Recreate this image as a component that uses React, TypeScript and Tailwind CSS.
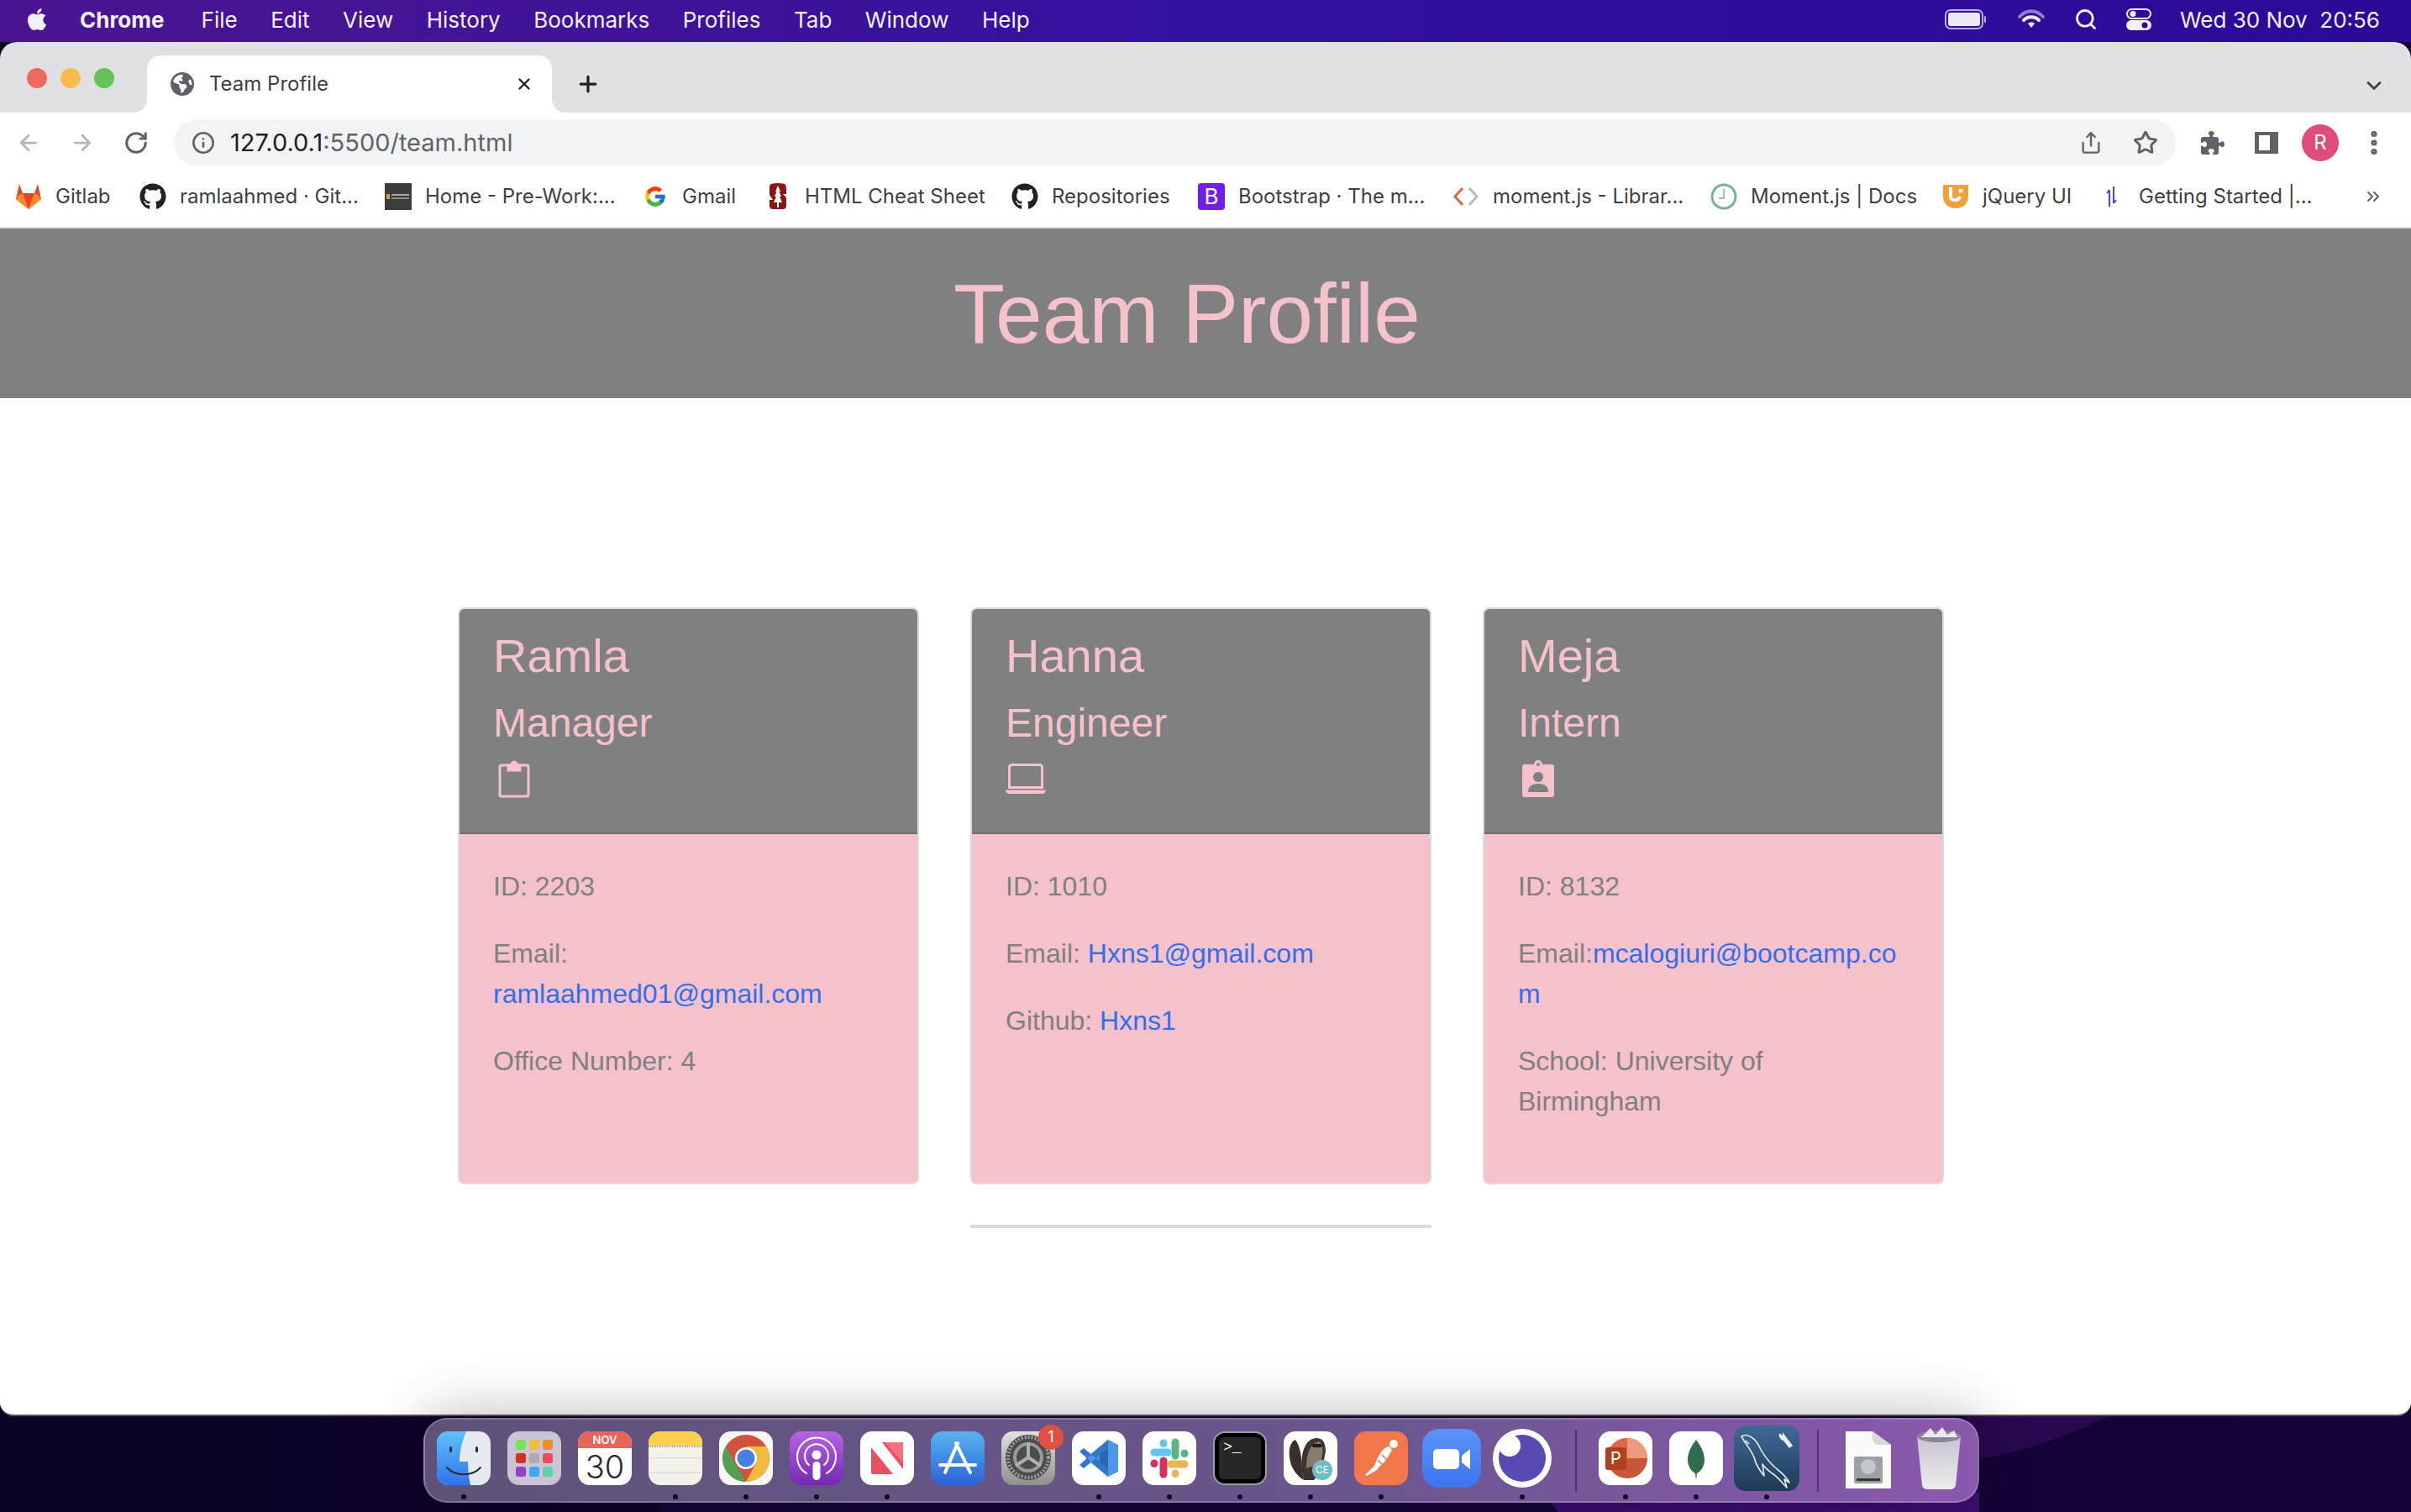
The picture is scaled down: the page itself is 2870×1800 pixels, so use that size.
import type { ReactNode } from 'react'
import { ArrowLeft, ArrowRight, ChevronDown, ChevronsRight, EllipsisVertical, Info, Plus, RotateCw, Search, Share, Star, X } from 'lucide-react'
import { BsLaptop } from 'react-icons/bs'
import { FaApple, FaEarthAmericas, FaGithub, FaPuzzlePiece } from 'react-icons/fa6'
import { FcGoogle } from 'react-icons/fc'

const menus = ['File', 'Edit', 'View', 'History', 'Bookmarks', 'Profiles', 'Tab', 'Window', 'Help']

function MenuBar() {
  return (
    <div className="h-[50px] shrink-0 flex items-center pb-1 bg-gradient-to-r from-[#4a1490] via-[#33109f] to-[#2a0a96] text-[#f3f0fa] text-[26px] font-['Inter',sans-serif]">
      <FaApple className="ml-[29px] text-[30px]" />
      <span className="ml-[36px] font-bold">Chrome</span>
      <div className="ml-[44px] flex gap-[39.5px]">
        {menus.map((m) => (
          <span key={m}>{m}</span>
        ))}
      </div>
      <div className="ml-auto flex items-center">
        <svg width="50" height="24" viewBox="0 0 50 24">
          <rect x="1" y="1" width="44" height="22" rx="6" fill="none" stroke="#b5aede" strokeWidth="2" />
          <rect x="4" y="4" width="38" height="16" rx="3" fill="#ece9f7" />
          <rect x="47" y="8" width="2" height="8" rx="1" fill="#b5aede" />
        </svg>
        <svg className="ml-[36px]" width="34" height="24" viewBox="0 0 34 24" fill="none" strokeLinecap="round">
          <path d="M3 9 C11 0 23 0 31 9" stroke="#8d7fd0" strokeWidth="4" />
          <path d="M8 13 C13 8 21 8 26 13" stroke="#f3f0fa" strokeWidth="4" />
          <path d="M13 17 L17 22 L21 17 C19 15 15 15 13 17 Z" fill="#f3f0fa" />
        </svg>
        <Search className="ml-[34px]" size={28} strokeWidth={2.4} />
        <svg className="ml-[34px]" width="30" height="26" viewBox="0 0 30 26">
          <rect x="1" y="1" width="28" height="11" rx="5.5" fill="none" stroke="#f3f0fa" strokeWidth="2" />
          <circle cx="8" cy="6.5" r="3.5" fill="#f3f0fa" />
          <rect x="0" y="14" width="30" height="12" rx="6" fill="#f3f0fa" />
          <circle cx="22" cy="20" r="3.5" fill="#2a0a96" />
        </svg>
        <span className="ml-[34px] mr-[37px] whitespace-pre">Wed 30 Nov  20:56</span>
      </div>
    </div>
  )
}

function TabFoot({ side }: { side: 'left' | 'right' }) {
  return (
    <div className={side === 'left' ? 'absolute -left-4 bottom-0 w-4 h-4 bg-white' : 'absolute -right-4 bottom-0 w-4 h-4 bg-white'}>
      <div className={side === 'left' ? 'w-full h-full bg-[#dfe1e5] rounded-br-2xl' : 'w-full h-full bg-[#dfe1e5] rounded-bl-2xl'} />
    </div>
  )
}

function TabStrip() {
  return (
    <div className="h-[84px] flex bg-[#dfe1e5] text-[#3c4043]">
      <div className="flex gap-4 pl-[32px] pt-[31px]">
        <div className="w-6 h-6 rounded-full bg-[#ee6a5f]" />
        <div className="w-6 h-6 rounded-full bg-[#f5bd4f]" />
        <div className="w-6 h-6 rounded-full bg-[#61c454]" />
      </div>
      <div className="relative ml-[39px] mt-4 w-[482px] h-[68px] bg-white rounded-t-[16px] flex items-center pl-[28px] text-[24px]">
        <TabFoot side="left" />
        <TabFoot side="right" />
        <FaEarthAmericas className="text-[28px] text-[#5f6368]" />
        <span className="ml-[18px]">Team Profile</span>
        <X className="ml-auto mr-[22px] text-[#202124]" size={22} strokeWidth={2.6} />
      </div>
      <Plus className="ml-[28px] mt-[35px] text-[#202124]" size={30} strokeWidth={2.6} />
      <ChevronDown className="ml-auto mr-[30px] mt-[38px] text-[#3c4043]" size={28} strokeWidth={2.4} />
    </div>
  )
}

function Toolbar() {
  return (
    <div className="h-[72px] bg-white flex items-center text-[#5f6368]">
      <ArrowLeft className="ml-[19px] text-[#b4b6b9]" size={30} strokeWidth={2.2} />
      <ArrowRight className="ml-[34px] text-[#b4b6b9]" size={30} strokeWidth={2.2} />
      <RotateCw className="ml-[34px]" size={30} strokeWidth={2.4} />
      <div className="ml-[30px] w-[2383px] h-[56px] rounded-full bg-[#f1f3f4] flex items-center pl-[21px]">
        <Info size={28} strokeWidth={2.2} />
        <span className="ml-[18px] text-[29px]">
          <span className="text-[#202124]">127.0.0.1</span>:5500/team.html
        </span>
        <Share className="ml-auto" size={28} strokeWidth={2} />
        <Star className="ml-[36px] mr-[21px]" size={30} strokeWidth={2.4} />
      </div>
      <FaPuzzlePiece className="ml-[30px] text-[28px]" />
      <div className="ml-[36px] w-[28px] h-[26px] border-[#5f6368] border-y-[4px] border-l-[5px] border-r-[10px]" />
      <div className="ml-[28px] w-[44px] h-[44px] rounded-full bg-[#de4c7b] text-white text-[24px] flex items-center justify-center">R</div>
      <EllipsisVertical className="ml-[24px]" size={36} strokeWidth={2.8} />
    </div>
  )
}

function GitlabIcon() {
  return (
    <svg width="32" height="32" viewBox="0 0 32 32">
      <path d="M16 31 L1 19 L5 1 L9 12 L23 12 L27 1 L31 19 Z" fill="#e24329" />
      <path d="M16 31 L1 19 L9 12 Z" fill="#fc6d26" />
      <path d="M16 31 L31 19 L23 12 Z" fill="#fc6d26" />
      <path d="M16 31 L1 19 L4 14 L9 12 L16 31 L23 12 L28 14 L31 19 Z" fill="#fca326" opacity="0.55" />
    </svg>
  )
}

function StanfordIcon() {
  return (
    <svg width="32" height="32" viewBox="0 0 32 32">
      <path d="M8 1 Q16 -1 24 1 Q26 2 26 8 V13 H22 L26 17 V27 Q26 31 22 31 H10 Q6 31 6 27 V20 H10 L6 14 V6 Q6 2 8 1 Z" fill="#8c1515" />
      <path d="M16 3 L19 10 H17.5 L20 16 H18 L21 23 H17 V29 H15 V23 H11 L14 16 H12 L14.5 10 H13 Z" fill="#fff" />
    </svg>
  )
}

function MomentIcon() {
  return (
    <svg width="32" height="32" viewBox="0 0 32 32" fill="none" strokeWidth="3">
      <path d="M12 6 L3 16 L12 26" stroke="#d9673f" />
      <path d="M20 6 L29 16 L20 26" stroke="#b9b9b9" />
    </svg>
  )
}

function ClockIcon() {
  return (
    <svg width="32" height="32" viewBox="0 0 32 32" fill="none" stroke="#75b0a8" strokeWidth="3">
      <circle cx="16" cy="16" r="14" />
      <path d="M16 7 V18 H10" strokeWidth="1.5" />
    </svg>
  )
}

function JqueryIcon() {
  return (
    <svg width="32" height="32" viewBox="0 0 32 32">
      <path d="M1 2 H31 V16 C31 25 24 30 16 30 C8 30 1 25 1 16 Z" fill="#efa23c" />
      <path d="M10 5 V16 C10 21 19 22 21 16" fill="none" stroke="#fff" strokeWidth="4" />
      <circle cx="22" cy="9" r="2.5" fill="#fff" />
    </svg>
  )
}

function GettingIcon() {
  return (
    <svg width="32" height="32" viewBox="0 0 32 32" fill="none" stroke="#5b3be8" strokeWidth="2">
      <path d="M13 8 V28 M13 8 L10 12" />
      <path d="M18 4 V24 M18 24 L21 20" />
    </svg>
  )
}

function HomeFavicon() {
  return (
    <svg width="32" height="32" viewBox="0 0 32 32">
      <rect width="32" height="32" fill="#3c3c3c" />
      <rect x="2" y="13" width="4" height="6" fill="#c9a13b" />
      <rect x="8" y="13" width="21" height="2" fill="#a8a8a8" />
      <rect x="8" y="17" width="21" height="2" fill="#8c8c8c" />
    </svg>
  )
}

type Bookmark = { label: string; width: string; icon: ReactNode }

const bookmarks: Bookmark[] = [
  { label: 'Gitlab', width: 'w-[148px]', icon: <GitlabIcon /> },
  { label: 'ramlaahmed · Git...', width: 'w-[292px]', icon: <FaGithub className="text-[32px] text-[#1f2328]" /> },
  { label: 'Home - Pre-Work:...', width: 'w-[306px]', icon: <HomeFavicon /> },
  { label: 'Gmail', width: 'w-[146px]', icon: <FcGoogle className="text-[28px]" /> },
  { label: 'HTML Cheat Sheet', width: 'w-[294px]', icon: <StanfordIcon /> },
  { label: 'Repositories', width: 'w-[222px]', icon: <FaGithub className="text-[32px] text-[#1f2328]" /> },
  {
    label: 'Bootstrap · The m...',
    width: 'w-[303px]',
    icon: <div className="w-8 h-8 rounded bg-[#6f1fe8] text-white text-[26px] leading-8 text-center">B</div>,
  },
  { label: 'moment.js - Librar...', width: 'w-[307px]', icon: <MomentIcon /> },
  { label: 'Moment.js | Docs', width: 'w-[276px]', icon: <ClockIcon /> },
  { label: 'jQuery UI', width: 'w-[186px]', icon: <JqueryIcon /> },
  { label: 'Getting Started |...', width: 'w-[290px]', icon: <GettingIcon /> },
]

function BookmarksBar() {
  return (
    <div className="h-[66px] shrink-0 bg-white border-b-2 border-[#dadce0] flex items-center pl-[18px] text-[24px] text-[#3c4043] pb-2">
      {bookmarks.map((b) => (
        <div key={b.label} className={`${b.width} flex items-center gap-4 shrink-0 whitespace-nowrap`}>
          <div className="w-8 h-8 flex items-center justify-center">{b.icon}</div>
          <span>{b.label}</span>
        </div>
      ))}
      <ChevronsRight className="ml-[25px] text-[#5f6368]" size={24} strokeWidth={2} />
    </div>
  )
}

function ClipboardIcon() {
  return (
    <svg className="ml-[6px]" width="38" height="46" viewBox="0 0 38 46" fill="none" stroke="#f5c2cc" strokeWidth="3">
      <rect x="2" y="7" width="34" height="37" rx="2" />
      <path d="M12 7 V13 H26 V7 H22 A3 4 0 0 0 16 7 Z" fill="#f5c2cc" />
    </svg>
  )
}

function BadgeIcon() {
  return (
    <svg className="ml-[5px]" width="38" height="44" viewBox="0 0 38 44">
      <path d="M3 5 H14 A5 5 0 0 1 24 5 H35 Q38 5 38 8 V41 Q38 44 35 44 H3 Q0 44 0 41 V8 Q0 5 3 5 Z" fill="#f5c2cc" />
      <circle cx="19" cy="5" r="2" fill="#808080" />
      <circle cx="19" cy="20" r="6" fill="#808080" />
      <path d="M7 38 C7 30 13 28 19 28 C25 28 31 30 31 38 Z" fill="#808080" />
    </svg>
  )
}

type Member = { name: string; role: string; icon: ReactNode; rows: ReactNode[] }

const linkClass = 'text-[#2f6ff0]'

const members: Member[] = [
  {
    name: 'Ramla',
    role: 'Manager',
    icon: <ClipboardIcon />,
    rows: [
      'ID: 2203',
      <>
        Email: <a className={linkClass}>ramlaahmed01@gmail.com</a>
      </>,
      'Office Number: 4',
    ],
  },
  {
    name: 'Hanna',
    role: 'Engineer',
    icon: <BsLaptop className="text-[48px] text-[#f5c2cc]" />,
    rows: [
      'ID: 1010',
      <>
        Email: <a className={linkClass}>Hxns1@gmail.com</a>
      </>,
      <>
        Github: <a className={linkClass}>Hxns1</a>
      </>,
    ],
  },
  {
    name: 'Meja',
    role: 'Intern',
    icon: <BadgeIcon />,
    rows: [
      'ID: 8132',
      <>
        Email:<a className={`${linkClass} break-all`}>mcalogiuri@bootcamp.com</a>
      </>,
      'School: University of Birmingham',
    ],
  },
]

function MemberCard({ member }: { member: Member }) {
  return (
    <div className="border-2 border-[#dcdcdc] rounded-lg overflow-hidden flex flex-col bg-[#f5c2cc]">
      <div className="h-[268px] shrink-0 bg-[#808080] border-b-2 border-[#6f6f6f] pl-[40px] pt-[22px] text-[#f5c2cc]">
        <div className="text-[56px] leading-[68px]">{member.name}</div>
        <div className="mt-[17px] text-[48px] leading-[58px]">{member.role}</div>
        <div className="mt-[14px] h-[46px] flex items-center">{member.icon}</div>
      </div>
      <div className="px-[40px] pt-[38px] pb-[41px] text-[32px] leading-[48px] text-[#808080]">
        {member.rows.map((row, i) => (
          <p key={i} className="mb-[32px]">
            {row}
          </p>
        ))}
      </div>
    </div>
  )
}

function Page() {
  return (
    <main className="flex-1 bg-white font-['Liberation_Sans',Arial,sans-serif]">
      <header className="h-[202px] bg-[#808080] flex items-center justify-center pr-[44px]">
        <h1 className="text-[100px] leading-none text-[#f5c2cc]">Team Profile</h1>
      </header>
      <div className="ml-[545px] w-[1770px] mt-[249px] grid grid-cols-[549px_549px_549px] gap-x-[61px]">
        {members.map((m) => (
          <MemberCard key={m.name} member={m} />
        ))}
        <hr className="col-start-2 mt-[48px] border-0 h-[4px] bg-[#dcdcdc]" />
      </div>
    </main>
  )
}

function FinderIcon() {
  return (
    <svg viewBox="0 0 64 64" className="w-16 h-16">
      <defs>
        <linearGradient id="finderA" x1="0" y1="0" x2="0" y2="1">
          <stop offset="0" stopColor="#5ec2fb" />
          <stop offset="1" stopColor="#2f72ea" />
        </linearGradient>
      </defs>
      <rect width="64" height="64" rx="14" fill="#e6e9ef" />
      <path d="M14 0 H35 C29 14 27 26 27 36 H37 C37 46 38 56 40 64 H14 A14 14 0 0 1 0 50 V14 A14 14 0 0 1 14 0 Z" fill="url(#finderA)" />
      <path d="M12 43 C22 54 42 54 52 43" fill="none" stroke="#1d2a3d" strokeWidth="2" strokeLinecap="round" />
      <rect x="15" y="18" width="3" height="7" rx="1.5" fill="#1d2a3d" />
      <rect x="46" y="18" width="3" height="7" rx="1.5" fill="#1d2a3d" />
    </svg>
  )
}

function LaunchpadIcon() {
  const cells = ['#7de058', '#f7bc3a', '#ee8d2e', '#d1311f', '#a9adb0', '#ee4b62', '#9340d0', '#3fa8f5', '#5fd0a8']
  return (
    <div className="w-16 h-16 rounded-[14px] bg-[#c9c5d2] grid grid-cols-3 gap-[4px] p-[10px]">
      {cells.map((c) => (
        <svg key={c} viewBox="0 0 12 12" className="w-full h-full">
          <rect width="12" height="12" rx="3" fill={c} />
        </svg>
      ))}
    </div>
  )
}

function CalendarIcon() {
  return (
    <div className="w-16 h-16 rounded-[14px] overflow-hidden bg-white flex flex-col items-center font-['Inter',sans-serif]">
      <div className="w-full h-[20px] bg-[#e8645a] text-white text-[13px] font-semibold leading-[20px] text-center">NOV</div>
      <div className="text-[#2a2a2a] text-[38px] font-light leading-[44px]">30</div>
    </div>
  )
}

function NotesIcon() {
  return (
    <svg viewBox="0 0 64 64" className="w-16 h-16">
      <rect width="64" height="64" rx="14" fill="#f3f1ea" />
      <path d="M0 17 V14 A14 14 0 0 1 14 0 H50 A14 14 0 0 1 64 14 V17 Z" fill="#fbd24f" />
      <path d="M0 18 H64" stroke="#a6a38f" strokeWidth="2" strokeDasharray="1 1" />
      <path d="M0 32 H64 M0 49 H64" stroke="#dfddd5" strokeWidth="1.5" />
    </svg>
  )
}

function ChromeIcon() {
  return (
    <svg viewBox="0 0 64 64" className="w-16 h-16">
      <rect width="64" height="64" rx="14" fill="#f7f7f7" />
      <circle cx="32" cy="32" r="28" fill="#d3523f" />
      <path d="M32 60 A28 28 0 0 1 8 18 L22 42 Z" fill="#559e53" />
      <path d="M32 60 A28 28 0 0 0 56 18 H32 L44 38 Z" fill="#eebb3f" />
      <circle cx="32" cy="32" r="13" fill="#fff" />
      <circle cx="32" cy="32" r="10.5" fill="#4a7fe4" />
    </svg>
  )
}

function PodcastsIcon() {
  return (
    <svg viewBox="0 0 64 64" className="w-16 h-16">
      <defs>
        <linearGradient id="podA" x1="0" y1="0" x2="0" y2="1">
          <stop offset="0" stopColor="#b565e8" />
          <stop offset="1" stopColor="#7429b0" />
        </linearGradient>
      </defs>
      <rect width="64" height="64" rx="14" fill="url(#podA)" />
      <g fill="none" stroke="#fff" strokeWidth="2" strokeLinecap="round">
        <path d="M20 50 A23 23 0 1 1 44 50" />
        <path d="M23 40 A14 14 0 1 1 41 40" />
      </g>
      <circle cx="32" cy="28" r="5.5" fill="#fff" />
      <rect x="27.5" y="36" width="9" height="22" rx="4.5" fill="#fff" />
    </svg>
  )
}

function NewsIcon() {
  return (
    <svg viewBox="0 0 64 64" className="w-16 h-16">
      <rect width="64" height="64" rx="14" fill="#fff" />
      <rect x="13" y="13" width="38" height="38" rx="2" fill="#ea4f62" />
      <path d="M13 13 H26 L51 45 V51 H39 L13 19 Z" fill="#fff" />
      <path d="M29 13 H51 V37 Z" fill="#f2737f" />
    </svg>
  )
}

function AppStoreIcon() {
  return (
    <svg viewBox="0 0 64 64" className="w-16 h-16">
      <defs>
        <linearGradient id="appA" x1="0" y1="0" x2="0" y2="1">
          <stop offset="0" stopColor="#58b4ee" />
          <stop offset="1" stopColor="#2a62d8" />
        </linearGradient>
      </defs>
      <rect width="64" height="64" rx="14" fill="url(#appA)" />
      <g stroke="#fff" strokeWidth="4" strokeLinecap="round">
        <path d="M32 14 L17 49" />
        <path d="M30 14 L47 49" />
        <path d="M11 40 H53" />
      </g>
    </svg>
  )
}

function PrefsIcon() {
  return (
    <div className="relative w-16 h-16">
      <svg viewBox="0 0 64 64" className="w-16 h-16">
        <defs>
          <linearGradient id="prefA" x1="0" y1="0" x2="0" y2="1">
            <stop offset="0" stopColor="#dfe1e2" />
            <stop offset="1" stopColor="#8f8f8c" />
          </linearGradient>
        </defs>
        <rect width="64" height="64" rx="14" fill="url(#prefA)" />
        <circle cx="32" cy="31" r="27" fill="#4c4c4c" />
        <circle cx="32" cy="31" r="24" fill="none" stroke="#a0a0a0" strokeWidth="4" strokeDasharray="2 2" />
        <circle cx="32" cy="31" r="16" fill="none" stroke="#9a9a9a" strokeWidth="4" />
        <path d="M32 31 V13 M32 31 L17 41 M32 31 L47 41" stroke="#b0b0b0" strokeWidth="4" />
      </svg>
      <div className="absolute -top-[8px] -right-[10px] w-[30px] h-[30px] rounded-full bg-[#e2503f] text-white text-[18px] leading-[30px] text-center font-['Inter',sans-serif]">1</div>
    </div>
  )
}

function VscodeIcon() {
  return (
    <svg viewBox="0 0 64 64" className="w-16 h-16">
      <rect width="64" height="64" rx="14" fill="#fff" />
      <path d="M43 10 L55 16 V48 L43 54 L16 32 Z" fill="#4c97e8" />
      <path d="M43 10 L43 54 L33 44 V20 Z" fill="#2b66ae" />
      <path d="M9 24 L14 20 L43 44 V54 Z M9 40 L14 44 L43 20 V10 Z" fill="#2f78c8" />
    </svg>
  )
}

function SlackIcon() {
  return (
    <svg viewBox="0 0 64 64" className="w-16 h-16">
      <rect width="64" height="64" rx="14" fill="#fff" />
      <g strokeLinecap="round" strokeWidth="9" fill="none">
        <path d="M30 25 H14" stroke="#64c5ee" />
        <path d="M25 14 V14.5" stroke="#64c5ee" />
        <path d="M39 13 V29" stroke="#5bb583" />
        <path d="M50 26 V26.5" stroke="#5bb583" />
        <path d="M34 39 H50" stroke="#e7b84f" />
        <path d="M39 50 V50.5" stroke="#e7b84f" />
        <path d="M25 35 V51" stroke="#d3325f" />
        <path d="M14 38 V38.5" stroke="#d3325f" />
      </g>
    </svg>
  )
}

function TerminalIcon() {
  return (
    <div className="w-16 h-16 rounded-[14px] border-2 border-[#9a9f9f] bg-black p-[5px]">
      <div className="w-full h-full rounded-[6px] bg-[#262626] text-white text-[18px] leading-[20px] pl-[5px] pt-[2px] font-['Liberation_Mono',monospace]">&gt;_</div>
    </div>
  )
}

function DbeaverIcon() {
  return (
    <div className="relative w-16 h-16 rounded-[14px] bg-white overflow-hidden">
      <svg viewBox="0 0 64 64" className="w-16 h-16">
        <path d="M14 10 C5 14 5 32 11 44 C14 50 20 56 24 58 C20 44 24 24 14 10 Z" fill="#3b2f2a" />
        <path d="M24 58 C18 36 22 10 38 8 C48 7 50 16 50 24 L48 34 L52 40 L36 58 Z" fill="#3f3430" />
        <path d="M27 44 C27 26 32 14 42 12 C47 14 48 24 44 38 Z" fill="#8a7a6a" />
        <rect x="34" y="15" width="12" height="4" rx="2" fill="#1f1a17" />
      </svg>
      <div className="absolute right-[6px] bottom-[6px] w-[24px] h-[24px] rounded-full bg-[#6fbcc2] text-white text-[12px] leading-[24px] text-center font-['Inter',sans-serif]">CE</div>
    </div>
  )
}

function PostmanIcon() {
  return (
    <svg viewBox="0 0 64 64" className="w-16 h-16">
      <rect width="64" height="64" rx="14" fill="#f2774a" />
      <circle cx="47" cy="15" r="5" fill="#fff" />
      <path d="M42 18 C36 18 30 26 26 36 L24 41 L13 52 L15 53 L27 46 L30 42 C36 38 42 28 45 22 Z" fill="#fff" />
      <path d="M33 28 L39 34 M28 34 L34 40" stroke="#f2774a" strokeWidth="1.5" />
    </svg>
  )
}

function ZoomIcon() {
  return (
    <svg viewBox="0 0 70 70" className="w-[70px] h-[70px]">
      <defs>
        <linearGradient id="zoomA" x1="0" y1="0" x2="0" y2="1">
          <stop offset="0" stopColor="#5b94f8" />
          <stop offset="1" stopColor="#3e73f0" />
        </linearGradient>
      </defs>
      <rect width="70" height="70" rx="20" fill="url(#zoomA)" />
      <rect x="13" y="24" width="31" height="24" rx="5" fill="#fff" />
      <path d="M47 32 L57 24 V48 L47 40 Z" fill="#fff" />
    </svg>
  )
}

function OwlIcon() {
  return (
    <svg viewBox="0 0 70 70" className="w-[70px] h-[70px]">
      <circle cx="35" cy="35" r="35" fill="#fff" />
      <circle cx="35" cy="35" r="28" fill="#574ab4" />
      <circle cx="20" cy="20" r="13" fill="#fff" />
    </svg>
  )
}

function PowerpointIcon() {
  return (
    <div className="relative w-16 h-16 rounded-[14px] bg-white">
      <svg viewBox="0 0 64 64" className="w-16 h-16">
        <circle cx="34" cy="32" r="24" fill="#c75737" />
        <path d="M34 8 A24 24 0 0 1 58 32 H34 Z" fill="#ef9a7b" />
        <path d="M34 8 A24 24 0 0 0 10 32 H34 Z" fill="#dc6a45" />
      </svg>
      <div className="absolute left-[8px] top-[19px] w-[25px] h-[27px] rounded-[3px] bg-[#b0401f] text-white text-[20px] leading-[27px] text-center font-['Inter',sans-serif]">P</div>
    </div>
  )
}

function MongoIcon() {
  return (
    <svg viewBox="0 0 64 64" className="w-16 h-16">
      <rect width="64" height="64" rx="14" fill="#fff" />
      <path d="M32 10 C24 20 22 28 22 34 C22 42 27 48 31 50 L32 58 L33 50 C37 48 42 42 42 34 C42 28 40 20 32 10 Z" fill="#2f6d4f" />
    </svg>
  )
}

function MysqlIcon() {
  return (
    <svg viewBox="0 0 78 78" className="w-[78px] h-[78px]">
      <defs>
        <linearGradient id="sqlA" x1="0" y1="0" x2="0" y2="1">
          <stop offset="0" stopColor="#3f6a96" />
          <stop offset="1" stopColor="#1f3a57" />
        </linearGradient>
      </defs>
      <rect width="78" height="78" rx="14" fill="url(#sqlA)" />
      <g fill="none" stroke="#e9f1f8" strokeWidth="1.6" strokeLinejoin="round">
        <path d="M9 13 C15 9 24 14 29 23 C34 33 40 42 49 50 C55 55 62 60 66 68 L60 64 L63 74 C57 68 53 62 47 58 C43 55 38 52 34 46 L36 60 C31 54 26 46 24 38 C21 30 14 22 9 13 Z" />
        <path d="M14 18 L18 22" />
      </g>
      <path d="M58 8 L63 15 L70 24 L66 27 L59 18 C55 17 53 13 54 9 L58 12 Z" fill="#e9f1f8" />
    </svg>
  )
}

function FileIcon() {
  return (
    <svg viewBox="0 0 54 72" className="w-[54px] h-[72px]">
      <path d="M0 4 H32 L54 20 V72 H0 Z" fill="#fafafa" />
      <path d="M32 4 L54 20 H40 Q32 20 32 12 Z" fill="#d8d8d8" />
      <rect x="10" y="34" width="34" height="32" rx="2" fill="#9aa0a3" />
      <circle cx="27" cy="46" r="9" fill="#c5c9cb" />
      <rect x="13" y="60" width="28" height="3" fill="#333" />
    </svg>
  )
}

function TrashIcon() {
  return (
    <svg viewBox="0 0 64 76" className="w-16 h-[76px]">
      <defs>
        <linearGradient id="trashA" x1="0" y1="0" x2="0" y2="1">
          <stop offset="0" stopColor="#c9c3d2" />
          <stop offset="1" stopColor="#ececec" />
        </linearGradient>
      </defs>
      <path d="M6 12 H58 L52 70 Q51 75 45 75 H19 Q13 75 12 70 Z" fill="url(#trashA)" />
      <ellipse cx="32" cy="12" rx="26" ry="7" fill="#8a8496" />
      <path d="M12 12 L22 2 L28 10 L36 1 L42 10 L50 5 L54 13 H10 Z" fill="#e9e9ee" />
    </svg>
  )
}

function DockItem({ dot, children }: { dot?: boolean; children: ReactNode }) {
  return (
    <div className="relative w-16 h-[97px] flex justify-center pt-[14px]">
      <div className="h-16 flex items-center justify-center">{children}</div>
      {dot && <div className="absolute left-[29px] top-[89px] w-[6px] h-[6px] rounded-full bg-[#0b0824]" />}
    </div>
  )
}

function Dock() {
  return (
    <div className="relative ml-[504px] mt-[2px] w-[1852px] h-[101px] rounded-[28px] border-2 border-white/20 bg-gradient-to-r from-[#5f5279] via-[#6a568e] via-60% to-[#8a58ae] shadow-[0_0_70px_rgba(0,0,0,0.3)] flex pl-[14px]">
      <div className="flex gap-[20px]">
        <DockItem dot><FinderIcon /></DockItem>
        <DockItem><LaunchpadIcon /></DockItem>
        <DockItem><CalendarIcon /></DockItem>
        <DockItem dot><NotesIcon /></DockItem>
        <DockItem dot><ChromeIcon /></DockItem>
        <DockItem dot><PodcastsIcon /></DockItem>
        <DockItem dot><NewsIcon /></DockItem>
        <DockItem><AppStoreIcon /></DockItem>
        <DockItem><PrefsIcon /></DockItem>
        <DockItem dot><VscodeIcon /></DockItem>
        <DockItem dot><SlackIcon /></DockItem>
        <DockItem dot><TerminalIcon /></DockItem>
        <DockItem dot><DbeaverIcon /></DockItem>
        <DockItem dot><PostmanIcon /></DockItem>
        <DockItem><ZoomIcon /></DockItem>
        <DockItem dot><OwlIcon /></DockItem>
      </div>
      <div className="ml-[31px] mt-[12px] w-[2px] h-[74px] bg-[#5b2c80]" />
      <div className="ml-[26px] flex gap-[20px]">
        <DockItem dot><PowerpointIcon /></DockItem>
        <DockItem dot><MongoIcon /></DockItem>
        <DockItem dot><MysqlIcon /></DockItem>
      </div>
      <div className="ml-[28px] mt-[12px] w-[2px] h-[74px] bg-[#5b2c80]" />
      <div className="ml-[27px] flex gap-[20px]">
        <DockItem><FileIcon /></DockItem>
        <DockItem><TrashIcon /></DockItem>
      </div>
    </div>
  )
}

function Wallpaper() {
  return (
    <svg className="absolute inset-0 w-full h-full" viewBox="0 0 2870 114" preserveAspectRatio="none">
      <path d="M790 114 L700 0 H1900 L1860 114 Z" fill="#16053a" />
      <path d="M1855 114 L1835 90 H2356 V114 Z" fill="#3f0f72" />
      <path d="M2340 0 H2510 C2460 25 2400 45 2350 52 Z" fill="#280950" />
    </svg>
  )
}

export default function App() {
  return (
    <div className="w-[2870px] h-[1800px] flex flex-col overflow-hidden bg-gradient-to-r from-[#0c0226] to-[#16033a] font-['Inter',sans-serif]">
      <MenuBar />
      <div className="h-[1636px] shrink-0 flex flex-col rounded-t-[20px] rounded-b-[16px] overflow-hidden border-b-2 border-[#555]">
        <TabStrip />
        <Toolbar />
        <BookmarksBar />
        <Page />
      </div>
      <div className="relative flex-1">
        <Wallpaper />
        <Dock />
      </div>
    </div>
  )
}
